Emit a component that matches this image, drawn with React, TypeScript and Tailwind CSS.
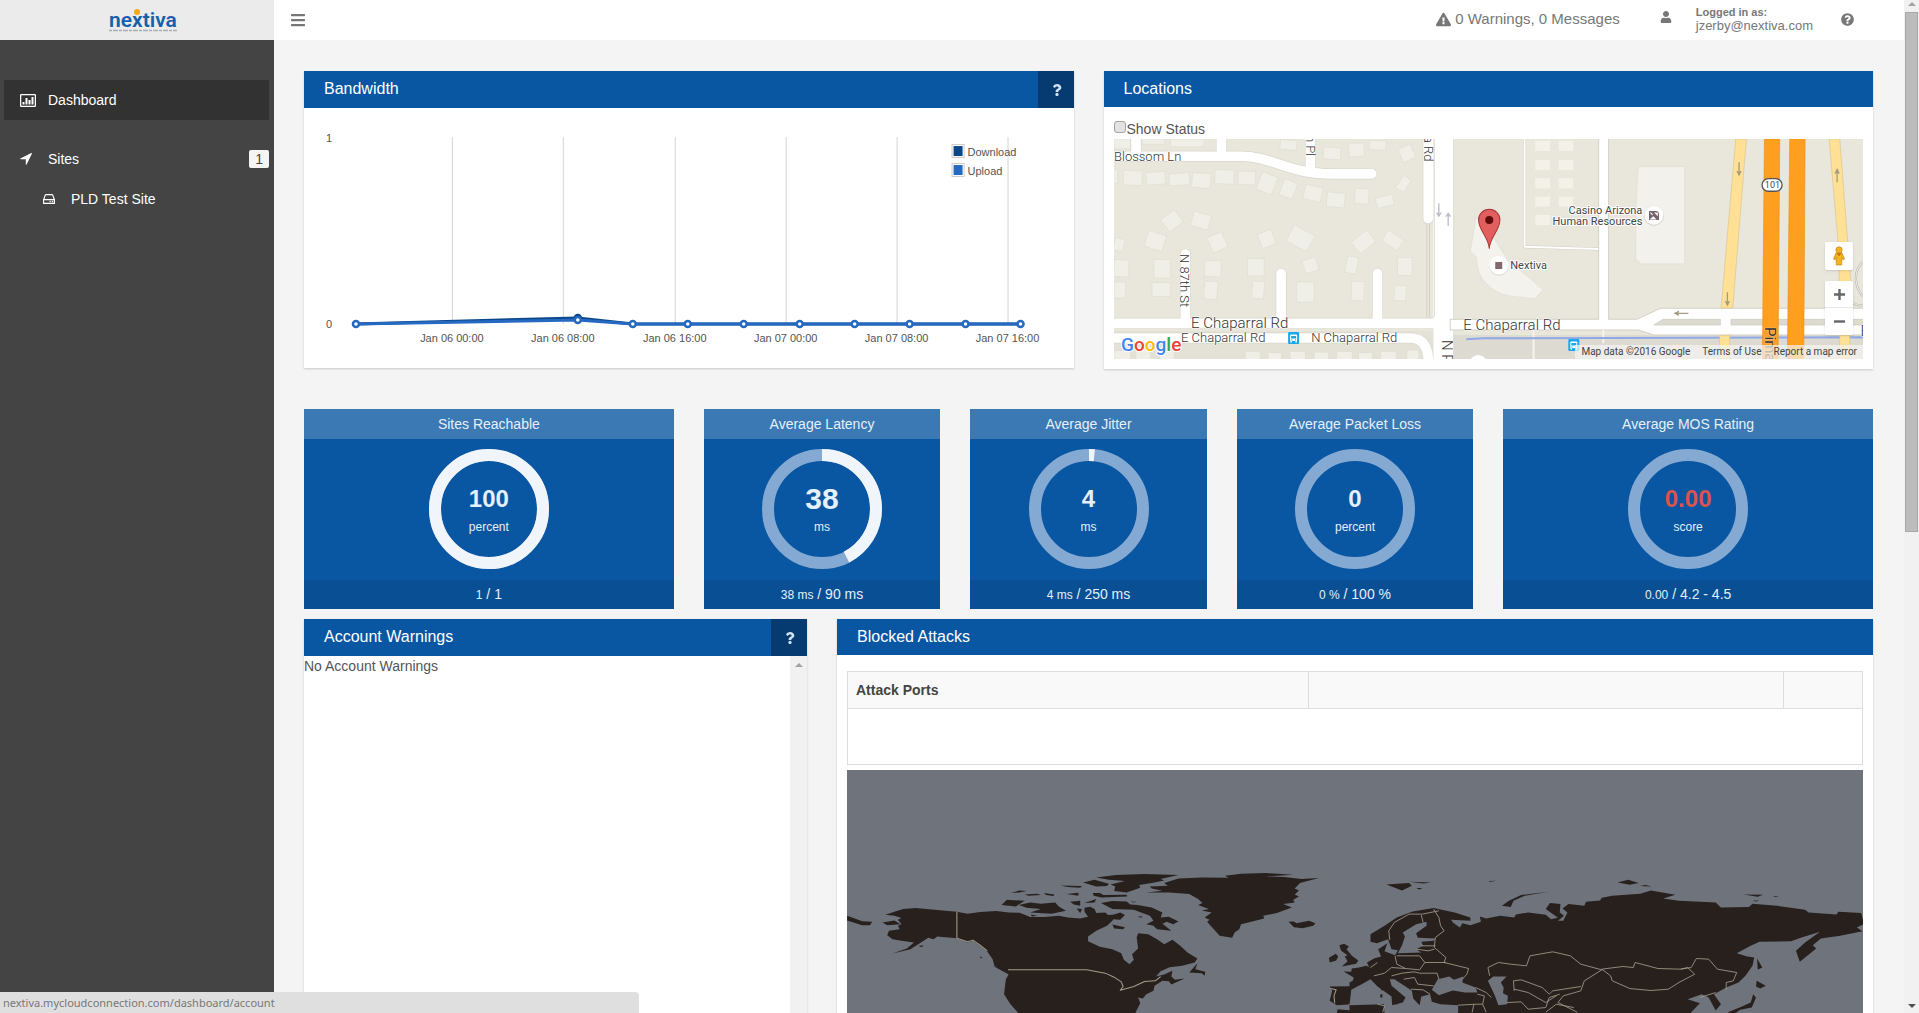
import type { ReactNode } from 'react'
import {
  FaBars,
  FaExclamationTriangle,
  FaQuestion,
  FaQuestionCircle,
  FaUser
} from 'react-icons/fa'

const stats = [
  { title: 'Sites Reachable', value: '100', unit: 'percent', fill: 100, now: '1', max: '1', wide: true },
  { title: 'Average Latency', value: '38', unit: 'ms', fill: 42.5, now: '38 ms', max: '90 ms', large: true },
  { title: 'Average Jitter', value: '4', unit: 'ms', fill: 1.6, now: '4 ms', max: '250 ms' },
  { title: 'Average Packet Loss', value: '0', unit: 'percent', fill: 0, now: '0 %', max: '100 %' },
  { title: 'Average MOS Rating', value: '0.00', unit: 'score', fill: 0, now: '0.00', max: '4.2 - 4.5', wide: true, bad: true }
]

const ticks = [
  { x: 148, label: 'Jan 06 00:00' },
  { x: 259, label: 'Jan 06 08:00' },
  { x: 371, label: 'Jan 06 16:00' },
  { x: 482, label: 'Jan 07 00:00' },
  { x: 593, label: 'Jan 07 08:00' },
  { x: 704, label: 'Jan 07 16:00' }
]

const points = [
  [52, 216], [274, 212], [329, 216], [384, 216], [440, 216],
  [496, 216], [551, 216], [606, 216], [662, 216], [717, 216]
]

function Panel({ title, help, className, children }: { title: string; help?: boolean; className: string; children: ReactNode }) {
  return (
    <section className={`bg-white shadow-[0_1px_2px_rgba(0,0,0,0.18)] ${className}`}>
      <header className={`flex items-stretch justify-between bg-[#0957a2] text-white ${help ? 'h-[37px]' : 'h-9'}`}>
        <h2 className="pl-5 pt-1.5 text-base leading-6">{title}</h2>
        {help && (
          <button type="button" aria-label={`${title} help`} className="flex w-9 items-center justify-center bg-[#053b70] pl-0.5 text-[#cfe2f5]">
            <FaQuestion size={12} />
          </button>
        )}
      </header>
      {children}
    </section>
  )
}

function BandwidthChart() {
  return (
    <svg viewBox="0 0 770 260" className="block h-[260px] w-full" fontFamily="Liberation Sans, Arial, sans-serif" fontSize="11" fill="#545454">
      {ticks.map((t) => (
        <g key={t.label}>
          <path d={`M${t.x + 0.5} 29V216`} stroke="#d5d5d5" />
          <text x={t.x} y="234" textAnchor="middle">{t.label}</text>
        </g>
      ))}
      <text x="22" y="34">1</text>
      <text x="22" y="220">0</text>
      <path d="M52 216 274 210 329 216H717" fill="none" stroke="#0a4689" strokeWidth="3" />
      <circle cx="274" cy="210" r="3" fill="#fff" stroke="#0a4689" strokeWidth="2.5" />
      <polyline points={points.join(' ')} fill="none" stroke="#2569c3" strokeWidth="3" />
      {points.map(([x, y]) => (
        <circle key={x} cx={x} cy={y} r="3" fill="#fff" stroke="#2569c3" strokeWidth="2.5" />
      ))}
      <rect x="648.5" y="36.500" width="12" height="13" fill="#fff" stroke="#ccc" />
      <rect x="650" y="38" width="9" height="10" fill="#0a4689" />
      <text x="664" y="48">Download</text>
      <rect x="648.5" y="55.500" width="12" height="13" fill="#fff" stroke="#ccc" />
      <rect x="650" y="57" width="9" height="10" fill="#2569c3" />
      <text x="664" y="67">Upload</text>
    </svg>
  )
}

// street centre lines, west half of the map
const streets = [
  'M20 289H420C520 289 560 342 700 342H815',
  'M108 200V280', 'M364 200V285', 'M631 200V335', 'M984 200V476',
  'M256 582V790', 'M543 641V790', 'M832 641V790',
  'M20 790H1010', 'M20 834H930Q985 834 985 910'
]

// x, y, width, height, rotation
const houses = [
  [42, 237, 50, 30, 0], [126, 237, 68, 16, 0], [212, 237, 100, 24, 0], [540, 240, 50, 30, 6], [670, 262, 52, 36, 4],
  [746, 250, 46, 40, -4], [808, 242, 50, 28, 4], [900, 258, 40, 44, -24], [42, 330, 10, 40, 0], [70, 332, 56, 44, 2],
  [138, 336, 58, 38, -4], [208, 340, 60, 36, -4], [276, 340, 56, 44, 4], [344, 330, 58, 42, 2], [414, 334, 52, 40, 2],
  [476, 342, 50, 56, 22], [544, 362, 42, 50, 22], [612, 378, 54, 44, 14], [680, 398, 54, 44, 6], [764, 386, 42, 46, 4],
  [828, 408, 52, 32, -14], [896, 350, 28, 44, 36], [190, 460, 52, 46, -38], [276, 460, 54, 44, 18], [138, 518, 56, 50, 18],
  [328, 522, 48, 50, -24], [478, 514, 44, 46, -22], [566, 508, 70, 54, 28], [760, 524, 60, 44, -38], [850, 522, 56, 38, 34],
  [42, 535, 30, 38, 12], [42, 600, 44, 50, 4], [162, 598, 50, 56, 0], [314, 602, 50, 48, 2], [442, 596, 50, 52, 0],
  [610, 596, 42, 40, -18], [738, 590, 34, 50, 10], [892, 592, 44, 54, 0], [42, 666, 34, 48, 0], [156, 668, 56, 42, 0],
  [312, 664, 40, 54, 6], [456, 664, 36, 52, 4], [590, 666, 52, 60, 0], [754, 664, 38, 58, 2], [882, 676, 36, 46, 4],
  [42, 872, 50, 30, 0], [108, 868, 44, 30, 0], [178, 872, 44, 30, 0], [436, 874, 44, 30, 0], [504, 878, 40, 30, 0],
  [570, 874, 46, 30, 0], [642, 876, 44, 30, 0], [710, 874, 46, 30, 0], [776, 878, 40, 30, 0], [842, 874, 46, 30, 0], [920, 870, 36, 30, 0]
]

const lots = [
  [165, 243], [235, 243], [165, 300], [235, 300], [165, 355], [235, 355], [165, 410], [235, 410], [165, 465]
]

function BusStop({ x, y }: { x: number; y: number }) {
  return (
    <g transform={`translate(${x} ${y})`}>
      <rect width="11" height="12" rx="1" fill="#18a8ee" />
      <path d="M3 2.500h5a1 1 0 0 1 1 1V9H2V3.500a1 1 0 0 1 1-1z" fill="#fff" />
      <path d="M3 4h5v2.500H3zM3 7.500h1.200v1H3zM6.800 7.500H8v1H6.800z" fill="#18a8ee" />
      <path d="M3 9v1.500M8 9v1.500" stroke="#fff" strokeWidth="1.500" />
    </g>
  )
}

function StreetMap() {
  return (
    <svg viewBox="0 0 749 220" preserveAspectRatio="xMidYMid slice" className="block h-full w-full" fontFamily="Roboto, sans-serif" fill="#4a4a4a">
      <rect width="749" height="220" fill="#e9e7dc" />
      <rect y="192" width="329" height="28" fill="#e4e1d6" />
      <rect x="336" y="196" width="413" height="24" fill="#dddbd1" />
      <g transform="translate(-14 -79) scale(.3333)">
        {houses.map(([x, y, w, h, r]) => (
          <rect key={`${x}-${y}`} x={x} y={y} width={w} height={h} transform={`rotate(${r} ${x + w / 2} ${y + h / 2})`} fill="#f0efe7" stroke="#e0ddd2" strokeWidth="2" />
        ))}
        <path d="M980 490V775M988 490V775" stroke="#c9c6ba" strokeWidth="2" />
        {streets.map((d) => (
          <path key={d} d={d} fill="none" stroke="#d9d6ca" strokeWidth="33" strokeLinecap="round" />
        ))}
        {streets.map((d) => (
          <path key={d} d={d} fill="none" stroke="#fff" strokeWidth="29" strokeLinecap="round" />
        ))}
        <rect x="1000" y="230" width="61" height="680" fill="#fff" />
        <path d="M1003 237V770M1060 237V778M1060 812V897" stroke="#d5d2c6" strokeWidth="2" />
        <path d="M1016 430v38m-7-10 7 10 7-10M1044 498v-38m-7 10 7-10 7 10" fill="none" stroke="#b9bcc8" strokeWidth="4" />
        <path d="M1128 470 1110 575 1128 590Q1130 645 1160 672 1195 712 1270 712L1285 715H1305L1328 690 1290 655 1225 605 1185 540Z" fill="#f3f2ed" stroke="#dfdcd2" strokeWidth="2" />
        <circle cx="1134" cy="912" r="27" fill="#fff" />
      </g>
      <g transform="translate(366 -79) scale(.3333)">
        <path d="M133 237V560L355 567" fill="none" stroke="#cfcdc4" strokeWidth="9" />
        <path d="M133 237V560L355 567" fill="none" stroke="#fff" strokeWidth="6" />
        {lots.map(([x, y]) => (
          <rect key={`${x}-${y}`} x={x} y={y} width="44" height="30" fill="#f4f2e8" />
        ))}
        <path d="M480 320H613V612H484L466 598 467 430 473 328Z" fill="#f2f1ec" stroke="#dfdcd2" strokeWidth="2" />
        <path d="M1148 605C1110 640 1130 690 1148 710M1148 735Q1120 740 1105 715" fill="none" stroke="#bdbbb3" strokeWidth="7" />
        <path d="M1148 605C1110 640 1130 690 1148 710M1148 735Q1120 740 1105 715" fill="none" stroke="#eeede8" strokeWidth="3" />
        <path d="M355 230H385V778H470L540 745H1160V825H520L475 810H-90V778H355Z" fill="#fff" stroke="#d3d0c6" strokeWidth="3" />
        <path d="M520 795 548 778H720V795ZM752 778H1160V795H752Z" fill="#dddbd1" stroke="#c9c7bd" strokeWidth="2" />
        <path d="M160 810V900M369 810V850" stroke="#f4f3ef" strokeWidth="6" />
        <path d="M-42 838 10 835 1160 832" fill="none" stroke="#8fa9e8" strokeWidth="6" />
        <path d="M766 237H798L757 744H722ZM718 826H748V897H716Z" fill="#ffe094" stroke="#d9c58c" strokeWidth="2" />
        <path d="M1046 237H1078L1112 680 1108 745H1078L1074 560ZM1078 825H1108V897H1076Z" fill="#ffe094" stroke="#d9c58c" strokeWidth="2" />
        <path d="M852 237H898L893 897H846ZM928 237H974L970 897H921Z" fill="#ff9f20" stroke="#ee8f18" strokeWidth="2" />
        <path d="M776 307v36m-6-10 6 12 6-12M741 697v36m-6-10 6 12 6-12M1070 367v-36m-6 10 6-12 6 12M624 760h-38m10-6-12 6 12 6" fill="none" stroke="#a39b82" strokeWidth="4" />
        <rect x="845" y="356" width="60" height="38" rx="19" fill="#fff" stroke="#555" strokeWidth="4" />
        <circle cx="521" cy="468" r="30" fill="#d9d7d0" />
        <circle cx="521" cy="466" r="28" fill="#fff" />
        <path d="M506 453h24l6 6v21h-30z" fill="#756469" />
        <path d="m510 458 7 7M525 459h6v6zM512 477l7-6 6 6z" stroke="#fff" strokeWidth="3" fill="#fff" />
        <circle cx="56" cy="619" r="28" fill="#d9d7d0" />
        <circle cx="56" cy="616" r="28" fill="#fff" />
        <rect x="45" y="606" width="21" height="21" fill="#85696d" />
        <path d="M27 566C25 530-5 512-5 480A32 32 0 0 1 59 480C59 512 29 530 27 566Z" fill="#e15f5f" stroke="#a83434" strokeWidth="3" />
        <circle cx="27" cy="480" r="12" fill="#5e0c0c" />
      </g>
      <g fontSize="13" fontWeight="300" stroke="#fff" strokeWidth="1" paintOrder="stroke" strokeLinejoin="round" fill="#333">
        <text x="0" y="22">Blossom Ln</text>
        <text x="67" y="203">E Chaparral Rd</text>
        <text x="197" y="203">N Chaparral Rd</text>
        <text fontSize="15" x="77" y="189">E Chaparral Rd</text>
        <text fontSize="15" x="349" y="191">E Chaparral Rd</text>
        <text transform="translate(66 115) rotate(90)">N 87th St</text>
        <text transform="translate(192 -4) rotate(90)">n Pl</text>
        <text transform="translate(310 -3) rotate(90)">a Rd</text>
        <text fontSize="15" transform="translate(328 201) rotate(90)">N Pima Rd</text>
        <text fontSize="15" fontWeight="400" stroke="#ffc67a" transform="translate(651 188) rotate(90)">Pima Fwy</text>
        <text fontSize="15" x="746" y="197">E</text>
      </g>
      <g fontSize="11" stroke="#fff" strokeWidth="2" paintOrder="stroke" fill="#444">
        <text x="396" y="130">Nextiva</text>
        <text x="528" y="75" textAnchor="end">Casino Arizona</text>
        <text x="528" y="86" textAnchor="end">Human Resources</text>
      </g>
      <text x="658" y="49" fontSize="9" textAnchor="middle">101</text>
      <BusStop x={174} y={193} />
      <BusStop x={454} y={200} />
      <text x="7" y="212" fontSize="19" fontWeight="500" stroke="#fff" strokeWidth="2" paintOrder="stroke">
        <tspan fill="#4285f4">G</tspan>
        <tspan fill="#ea4335">o</tspan>
        <tspan fill="#fbbc05">o</tspan>
        <tspan fill="#4285f4">g</tspan>
        <tspan fill="#34a853">l</tspan>
        <tspan fill="#ea4335">e</tspan>
      </text>
    </svg>
  )
}

function WorldMap() {
  return (
    <svg viewBox="0 0 1015 440" className="block w-full bg-[#6e737c]" strokeLinejoin="round">
      {/* Americas, Greenland and the Atlantic side of Europe */}
      <g transform="translate(-17 -21) scale(.3571 .3333)" fill="#28201d">
        <path d="M155 497 180 488 205 480 240 477 300 483 355 488 385 494 420 489 465 486 500 490 530 491 545 497 560 504 600 504 640 500 665 505 700 508 722 503 712 488 712 476 728 473 740 480 745 492 770 490 778 498 800 496 790 515 775 530 745 545 722 562 722 576 755 593 790 600 815 612 822 632 838 645 850 632 845 615 862 598 858 565 862 552 890 555 915 570 935 585 958 572 980 590 1000 610 1028 628 1020 640 985 650 950 654 925 666 912 682 935 676 958 665 955 682 965 692 992 688 955 706 948 696 930 695 908 710 905 725 885 735 875 748 862 745 868 762 855 789 900 1000 500 1000 525 789 505 765 487 735 492 690 500 675 460 650 455 630 440 607 420 590 400 575 385 580 355 567 300 562 290 570 275 566 250 583 225 600 175 613 215 598 235 580 200 575 175 570 160 558 165 545 195 540 190 530 200 525 190 512 200 507 180 500Z" />
        <path d="M885 430 930 425 900 418 895 412 945 410 935 402 975 388 1040 385 1115 386 1105 380 1150 374 1220 372 1295 377 1220 382 1270 384 1320 390 1368 387 1315 402 1300 418 1312 424 1300 436 1312 442 1296 452 1300 460 1268 465 1292 475 1250 492 1212 500 1215 508 1150 525 1145 540 1132 550 1125 566 1090 560 1065 530 1055 518 1062 512 1048 505 1068 490 1040 484 1060 480 1030 468 1042 462 1030 450 1005 435 950 430Z" />
        <path d="M745 385 800 378 880 375 975 378 925 390 935 394 900 402 865 408 868 416 830 430 795 426 798 412 785 406 825 396 780 392Z" />
        <path d="M708 400 740 392 780 404 775 411 745 412Z" />
        <path d="M735 432 755 432 765 438 830 437 832 442 760 445 738 440Z" />
        <path d="M758 462 790 456 830 457 840 466 860 468 900 475 930 490 925 505 948 503 975 517 960 525 942 518 930 524 955 545 915 540 905 530 885 525 905 515 895 500 850 482 790 480Z" />
        <path d="M528 468 560 460 590 464 630 460 640 472 660 485 620 494 560 490 590 480 550 476Z" />
        <path d="M480 468 495 452 545 455 520 472ZM506 432 530 424 550 426 530 430ZM545 436 580 434 590 438 555 440ZM598 432 628 436 625 441 605 438ZM645 409 670 410 705 411 700 416 665 414ZM662 435 695 431 695 440ZM672 458 700 455 700 470 682 466ZM712 462 745 450 740 460ZM785 500 812 490 825 498 812 512 792 510ZM790 526 825 534 820 540 795 538ZM860 502 875 502 870 506ZM840 458 858 458 850 460ZM690 478 705 480 700 492ZM562 496 580 500 565 502Z" />
        <path d="M48 500 75 510 90 516 118 518 112 528 90 528 48 514ZM147 520 180 514 197 525 160 528ZM455 650 480 658 502 677 480 664ZM418 622 426 624 424 628ZM248 590 263 589 255 594Z" />
        <path d="M1005 670 1028 642 1022 660 1050 668 1048 680 1040 672ZM1283 518 1298 517 1305 522 1340 515 1358 522 1352 530 1322 537 1298 534Z" />
        <path d="M1425 588 1438 584 1452 592 1445 600 1460 620 1478 634 1472 644 1432 652 1448 636 1440 622 1448 618 1430 605ZM1396 626 1415 614 1422 622 1416 634 1398 640Z" />
        <path d="M1437 667 1458 668 1460 658 1480 655 1500 650 1530 665 1600 660 1600 705 1545 705 1520 712 1490 718 1480 735 1465 750 1450 766 1418 768 1398 755 1405 725 1398 712 1460 711 1465 685Z" />
        <path d="M1420 780 1460 784 1480 776 1535 768 1600 765 1600 1000 1380 1000Z" />
        <path d="M1535 710h10v8h-10zM1537 730h10v14h-10z" />
      </g>
      <g transform="translate(-17 -21) scale(.3571 .3333)" fill="none" stroke="#a39a8b" strokeWidth="3">
        <path d="M355 488V567L385 578 400 573 420 588 440 605M498 662H718L740 666 770 672 795 684 815 698 820 712 812 723 850 712 880 697 910 695 925 682M1400 718 1416 722 1410 740 1412 762M1458 712 1490 718M1530 680 1600 670M1540 766 1535 790" />
      </g>
      {/* Eurasia */}
      <g transform="translate(523 -21) scale(.3501 .3333)">
        <g fill="#28201d">
          <path d="M0 555 40 530 75 505 120 487 180 477 240 490 285 505 285 515 230 512 235 520 255 535 262 522 285 528 315 518 312 502 330 508 370 500 410 505 415 496 450 490 500 497 515 510 535 506 520 495 500 480 512 462 542 465 540 490 552 500 535 515 550 515 562 490 548 478 565 465 610 470 615 458 655 454 660 446 690 440 770 434 800 424 870 437 835 448 880 455 985 460 1000 475 1080 474 1090 464 1160 470 1240 482 1250 490 1330 496 1335 488 1400 492 1408 525 1388 535 1404 546 1340 560 1285 568 1262 588 1272 598 1240 625 1225 638 1214 605 1240 580 1283 548 1230 565 1200 576 1110 578 1085 590 1045 612 1075 622 1095 625 1090 650 1070 680 1050 700 1015 715 980 735 1000 765 985 784 965 745 945 735 905 750 940 762 915 789 940 1000 -60 1000 -60 700 0 665 -10 640 10 628 30 622 22 600 48 582 40 606 70 618 78 603 60 600 50 570 18 582 0 578Z" />
          <path d="M375 470 395 455 430 438 508 428 440 440 408 455 400 474ZM705 400 735 392 765 402 740 407ZM768 411 785 408 802 412ZM1065 436 1120 437 1105 443ZM45 406 110 402 118 410 90 424ZM110 398 172 400 150 403ZM130 417 148 417 140 421ZM337 396 362 395 340 398ZM1090 455 1110 454 1100 457ZM1148 441 1166 442 1155 444Z" />
          <path d="M1103 628 1118 655 1105 662ZM1102 695 1128 710 1112 718 1100 712ZM1092 735 1100 745 1088 775 1055 782 1030 800 1020 789 1060 772 1085 760Z" />
        </g>
        <g fill="#6e737c">
          <path d="M78 612 90 588 98 562 92 550 130 525 160 518 160 530 130 552 135 566 185 568 180 575 145 578 150 590 130 600 145 610Z" />
          <path d="M175 722 192 690 225 682 238 692 265 682 262 700 300 715 305 730 270 730 235 724 195 738Z" />
          <path d="M335 695 350 682 388 682 372 700 380 715 378 732 392 740 390 765 365 768 355 740Z" />
          <path d="M-55 722-20 702 0 690 20 712 60 742 62 768 92 760 100 745 60 710 55 690 68 690 100 712 118 725 122 748 140 768 145 742 170 735 175 758 200 765 250 768 250 789 220 830 100 810 40 795 38 765-60 768Z" />
        </g>
        <path d="M60 758 80 760 76 766ZM28 735h6v10h-6zM30 715h5v8h-5z" fill="#28201d" />
        <g fill="none" stroke="#a39a8b" strokeWidth="2.500">
          <path d="M55 572 52 545 68 520 110 495 148 495 195 485M145 498 150 520M180 480 195 505 200 530 210 545 185 565 182 595 215 625 210 640 280 658 275 675 262 690M145 590 185 590M130 600 165 605 182 600M75 620 140 620 155 640 215 640M70 620 75 645 100 658 140 662 155 640M10 680 40 672 60 655 100 658M60 680 90 672 125 668 140 672 190 672 195 690M95 690 125 685 135 705 180 710M115 720 150 722 170 735M0 655 20 640M300 715 330 730 345 745M305 735 325 740 320 765 330 789M250 768 300 765 320 765M290 789 295 765M20 765 40 770 35 789" />
          <path d="M340 680 335 655 365 640 400 645 445 650 455 620 520 608 570 620 600 645 660 662 610 695 600 725 550 740 535 760 590 789M410 725 408 695 430 692 490 715 510 735 520 725 600 712M410 720 450 730 500 760 530 740M390 760 430 758 450 780 500 775 510 745 540 735M500 789 530 765 580 775" />
          <path d="M660 660 720 652 750 655 755 640 820 658 885 660 905 655 925 675 880 700 850 720 800 724 740 718 690 695 685 680ZM885 660 915 655 930 628 965 630 990 660 1045 670 1035 695 1015 700 1015 720M940 745 985 730" />
        </g>
      </g>
    </svg>
  )
}

function StatTile({ title, value, unit, fill, now, max, wide, large, bad }: (typeof stats)[number]) {
  return (
    <section className={`flex flex-col bg-[#0957a2] text-center text-[#e4f0fb] ${wide ? 'col-span-3' : 'col-span-2'}`}>
      <h3 className="h-[30px] bg-[#3b79b5] text-sm leading-[30px]">{title}</h3>
      <div className="grid h-[141px] place-items-center pb-px">
        <svg viewBox="0 0 120 120" className="col-start-1 row-start-1 size-[120px] -rotate-90" fill="none" strokeWidth="12">
          <circle cx="60" cy="60" r="54" stroke="#84a9d2" />
          {fill > 0 && <circle cx="60" cy="60" r="54" stroke="#f0f5fc" pathLength="100" strokeDasharray={`${fill} 100`} />}
        </svg>
        <div className="col-start-1 row-start-1 pt-1">
          <p className={`font-bold leading-8 ${large ? 'text-3xl leading-8' : 'text-2xl leading-8'} ${bad ? 'text-[#d9534f]' : ''}`}>{value}</p>
          <p className="text-xs leading-6">{unit}</p>
        </div>
      </div>
      <p className="h-[29px] bg-[#084f93] text-sm leading-[29px]">
        <span className="text-xs">{now}</span> / {max}
      </p>
    </section>
  )
}

function Sidebar() {
  return (
    <aside className="flex w-[274px] shrink-0 flex-col bg-[#444]">
      <a href="#home" className="flex h-10 items-center justify-center bg-[#ebebeb] pl-3" aria-label="nextiva">
        <svg viewBox="0 0 80 30" className="h-[30px] w-20">
          <text x="40" y="22" textAnchor="middle" fontFamily="Roboto, sans-serif" fontWeight="600" fontSize="21" fill="#1560a8">nextiva</text>
          <circle cx="34" cy="7" r="3" fill="#f5a81c" />
          <path d="M6 25.500H74" stroke="#a9adb1" strokeWidth="1.500" strokeDasharray="3 1 5 1" />
        </svg>
      </a>
      <nav className="px-1 pt-10 text-sm text-white">
        <a href="#dashboard" className="mr-px flex h-10 items-center gap-3 bg-[#323232] pl-4 pr-2">
          <svg viewBox="0 0 16 13" className="w-4" fill="none" stroke="#fff">
            <rect x=".6" y=".6" width="14.800" height="11.800" rx="1" strokeWidth="1.300" />
            <path d="M3.500 10.500V8M6.500 10.500V4M9.500 10.500V6M12.500 10.500V3" strokeWidth="2" />
          </svg>
          Dashboard
        </a>
        <a href="#sites" className="mr-px mt-[19px] flex h-10 items-center pl-4">
          <svg viewBox="0 0 12 12" className="mr-4 size-3" fill="#fff">
            <path d="M11.900.7 6.600 11.600Q6.100 12.200 5.800 11.400V6.300H.6Q-.2 5.900.4 5.500L11.300.1Q12.100-.1 11.900.7z" />
          </svg>
          Sites
          <span className="ml-auto rounded-xs bg-[#f5f5f5] px-1.5 text-sm leading-[18px] text-[#444]">1</span>
        </a>
        <a href="#pld" className="flex h-10 items-center gap-4 pl-[39px]">
          <svg viewBox="0 0 12 10" className="w-3" fill="none" stroke="#fff" strokeWidth="1.200" strokeLinejoin="round">
            <path d="M.6 5.600 2.400.9Q2.600.6 3 .6H9Q9.400.6 9.600.9L11.400 5.600V9.400H.6zM.6 5.600H11.400" />
            <path d="M6.500 7.500H7.700M8.800 7.500H10" strokeWidth="1.300" />
          </svg>
          PLD Test Site
        </a>
      </nav>
    </aside>
  )
}

export default function App() {
  return (
    <div className="flex h-screen overflow-hidden bg-[#f4f4f4] font-['Liberation_Sans',Arial,sans-serif] text-sm text-[#555]">
      <Sidebar />

      <div className="flex min-w-0 flex-1 flex-col">
        <header className="flex h-10 shrink-0 items-center bg-white pl-4 pr-[50px] text-[#777]">
          <button type="button" aria-label="Toggle menu"><FaBars size={16} /></button>
          <a href="#messages" className="ml-auto flex items-center gap-1 pb-0.5 text-[15px] leading-6">
            <FaExclamationTriangle size={15} />
            0 Warnings, 0 Messages
          </a>
          <FaUser size={12} className="mb-1.5 ml-10" />
          <p className="ml-6 pb-0.5 text-[13px] leading-[13px]">
            <b className="block text-[11px]">Logged in as:</b>
            jzerby@nextiva.com
          </p>
          <button type="button" aria-label="Help" className="ml-7 pb-0.5"><FaQuestionCircle size={13} /></button>
        </header>

        <main className="grid grid-cols-12 items-start gap-x-[30px] pl-[30px] pr-[31px] pt-[31px]">
          <Panel title="Bandwidth" help className="col-span-6">
            <BandwidthChart />
          </Panel>
          <Panel title="Locations" className="col-span-6 mb-10">
            <div className="px-2.5 pb-2.5 pt-3">
              <label className="flex h-5 items-center leading-5">
                <input type="checkbox" className="mb-1 mr-px size-3 appearance-none rounded-[3px] border border-[#a5a5a5] bg-[#e2e2e2]" />
                Show Status
              </label>
              <div className="relative h-[220px] overflow-hidden">
                <StreetMap />
                <button type="button" aria-label="Street View" className="absolute bottom-[89px] right-2.5 flex size-7 items-center justify-center rounded-xs bg-white shadow">
                  <svg viewBox="0 0 12 20" className="h-5 w-3" fill="#f5b41d" stroke="#b97b12" strokeWidth=".6">
                    <path d="M3 7h6l2.500 6-1.500.8-1.200-2.300V19H3.200v-7.500L2 13.800.5 13z" />
                    <circle cx="6" cy="4" r="3.200" />
                    <path d="m4 7.500 2 2.500 2-2.500z" fill="#e2661d" />
                  </svg>
                </button>
                <div className="absolute bottom-6 right-2.5 w-7 divide-y divide-gray-200 rounded-xs bg-white text-[#666] shadow">
                  {['Zoom in', 'Zoom out'].map((name) => (
                    <button key={name} type="button" aria-label={name} className="flex h-[27px] w-7 items-center justify-center">
                      <svg viewBox="0 0 11 11" className="size-[11px]" stroke="currentColor" strokeWidth="2.400">
                        <path d={name === 'Zoom in' ? 'M0 5.500H11M5.500 0V11' : 'M0 5.500H11'} />
                      </svg>
                    </button>
                  ))}
                </div>
                <div className="absolute bottom-0 right-0 flex gap-3 bg-[#f5f5f5]/70 px-1.5 font-[Roboto,sans-serif] text-[10px] leading-[14px] text-[#444]">
                  <span>Map data ©2016 Google</span>
                  <a href="#terms">Terms of Use</a>
                  <a href="#report">Report a map error</a>
                </div>
              </div>
            </div>
          </Panel>

          {stats.map((s) => (
            <StatTile key={s.title} {...s} />
          ))}

          <Panel title="Account Warnings" help className="col-span-4 mt-2.5">
            <div className="flex h-[500px] justify-between">
              <p className="leading-5">No Account Warnings</p>
              <div className="w-[17px] bg-[#f1f1f1] pt-[7px]">
                <svg viewBox="0 0 8 4" className="mx-auto w-2" fill="#a3a3a3"><path d="M0 4 4 0l4 4z" /></svg>
              </div>
            </div>
          </Panel>
          <Panel title="Blocked Attacks" className="col-span-8 mt-2.5">
            <div className="px-2.5 pt-4">
              <table className="mb-[5px] w-full table-fixed border-collapse border border-[#ddd] text-left">
                <thead>
                  <tr className="h-[37px] bg-[#f9f9f9] text-[#444]">
                    <th className="w-[45.4%] border border-[#ddd] px-2">Attack Ports</th>
                    <th className="w-[46.8%] border border-[#ddd]" />
                    <th className="border border-[#ddd]" />
                  </tr>
                </thead>
                <tbody>
                  <tr className="h-14"><td colSpan={3} /></tr>
                </tbody>
              </table>
              <WorldMap />
            </div>
          </Panel>
        </main>
      </div>

      <div className="flex w-[15px] shrink-0 flex-col items-center bg-[#f1f1f1]">
        <svg viewBox="0 0 8 12" className="h-3 w-2 shrink-0" fill="#a3a3a3"><path d="M0 6 4 2l4 4z" /></svg>
        <div className="h-[520px] w-[13px] border border-[#a8a8a8] bg-[#bcbcbc]" />
        <svg viewBox="0 0 8 12" className="mt-auto h-3 w-2 shrink-0" fill="#505050"><path d="M0 3l4 4 4-4z" /></svg>
      </div>

      <div className="fixed bottom-0 left-0 h-[21px] w-[639px] rounded-tr bg-[#dfdfdf] pl-[3px] font-['Noto_Sans',sans-serif] text-[11px] leading-[22px] text-[#777]">
        nextiva.mycloudconnection.com/dashboard/account
      </div>
    </div>
  )
}
